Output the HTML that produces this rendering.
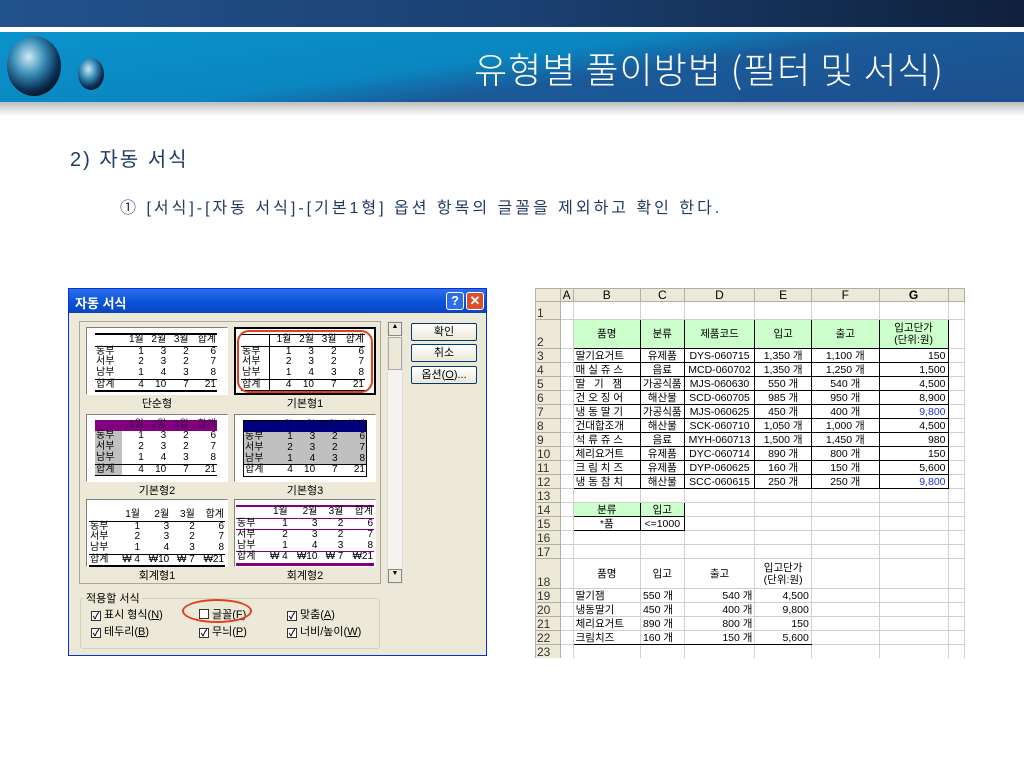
<!DOCTYPE html>
<html><head><meta charset="utf-8"><style>
*{margin:0;padding:0;box-sizing:border-box}
body{width:1024px;height:768px;position:relative;background:#fff;font-family:"Liberation Sans","Noto Sans CJK KR",sans-serif;overflow:hidden}
.abs{position:absolute}
#top{left:0;top:0;width:1024px;height:27px;background:linear-gradient(90deg,#22528c,#1b4173 50%,#0f203b)}
#band{left:0;top:32px;width:1024px;height:70px;background:linear-gradient(172deg,#0b93cc 0%,#0a86c0 45%,#1a5a99 60%,#1d4f8e 100%)}
#shadow{left:0;top:102px;width:1024px;height:14px;background:linear-gradient(#bdbdbd,#fff)}
#title{right:80px;top:42px;color:#fff;font-size:36px;font-family:"Noto Sans CJK KR",sans-serif;font-weight:300;letter-spacing:1px}
.h1{left:70px;top:143px;font-size:20px;color:#1f3b63;letter-spacing:2px}
.h2{left:120px;top:194px;font-size:16px;color:#1f3b63;letter-spacing:3px}
#dlg{left:68px;top:288px;width:419px;height:368px;background:#ece9d8;border:1px solid #0831d9}
#tb{left:0;top:0;width:417px;height:24px;background:linear-gradient(#2a6fe9,#0a50d8 60%,#0a46c0);color:#fff;font-weight:bold;font-size:13px;padding:4px 0 0 6px}
.tbb{top:3px;width:18px;height:18px;border:1px solid #fff;border-radius:3px;color:#fff;font-size:13px;font-weight:bold;text-align:center;line-height:16px}
#pv{left:10px;top:32px;width:302px;height:263px;border:1px solid #aca899;background:#ece9d8}
.p{position:absolute;width:142px;height:68px;background:#fff;border:1px solid #808080;border-right-color:#fff;border-bottom-color:#fff;font-size:10px;line-height:11px}
.p table{position:absolute;border-collapse:collapse;font-size:10px;line-height:10.5px}
.p td{padding:0 1px;text-align:right;height:11px}
.p td:first-child{text-align:left}
.lbl{position:absolute;width:142px;text-align:center;font-size:11px}
.btn{position:absolute;left:342px;width:66px;height:18px;border:1px solid #003c74;border-radius:2px;background:linear-gradient(#fff,#ece9d8);font-size:11px;text-align:center;line-height:16px}
#sb{left:318px;top:32px;width:16px;height:263px;background:#f4f3ee;border:1px solid #ddd}
.chk{position:absolute;font-size:11px}
.chk b{display:inline-block;width:10px;height:10px;border:1px solid #333;background:#fff;vertical-align:-1px;margin-right:3px;font-size:9px;line-height:8px;text-align:center;font-weight:bold}
#sh{left:535px;top:288px;width:430px;height:370px;background:#fff;overflow:hidden}
#sh table{border-collapse:collapse;font-size:10.5px;table-layout:fixed}
#sh td{border:1px solid #d0d0d0;height:14px;padding:0 2px;white-space:nowrap;overflow:hidden;line-height:12px}
#sh td.rh{background:#ece9d8;border-color:#b0b0a0;text-align:left;font-size:12px;color:#333;padding:0 1px;vertical-align:bottom}
#sh tr.ch td{background:#ece9d8;border-color:#b0b0a0;text-align:center;font-size:12px;height:13px}
.g{background:#ccffcc;text-align:center}
.bx{border:1px solid #000 !important}
.r{text-align:right}.c{text-align:center}.bl{color:#2233dd}
</style></head><body>
<div id="top" class="abs"></div>
<div id="band" class="abs"></div>
<div id="shadow" class="abs"></div>
<svg class="abs" style="left:4px;top:34px" width="110" height="66">
<defs><radialGradient id="s1" cx="40%" cy="35%" r="65%"><stop offset="0" stop-color="#cfe9f5"/><stop offset=".45" stop-color="#3a8fb8"/><stop offset=".85" stop-color="#0b2f55"/><stop offset="1" stop-color="#051a30"/></radialGradient></defs>
<ellipse cx="30" cy="32" rx="27" ry="30" fill="url(#s1)"/>
<ellipse cx="87" cy="40" rx="13" ry="16" fill="url(#s1)"/>
</svg>
<div id="title" class="abs">유형별 풀이방법 (필터 및 서식)</div>
<div class="abs h1">2) 자동 서식</div>
<div class="abs h2">① [서식]-[자동 서식]-[기본1형] 옵션 항목의 글꼴을 제외하고 확인 한다.</div>

<div id="dlg" class="abs">
<div id="tb" class="abs">자동 서식</div>
<div class="abs tbb" style="left:377px;background:#2a6fe9">?</div>
<div class="abs tbb" style="left:397px;background:#d9512c">✕</div>
<div id="pv" class="abs">
 <div class="p" style="left:6px;top:5px"><table style="left:8px;top:5px;width:122px;border-top:2px solid #000"><tr style="border-bottom:1px solid #000"><td></td><td>1월</td><td>2월</td><td>3월</td><td>합계</td></tr><tr><td>동부</td><td>1</td><td>3</td><td>2</td><td>6</td></tr><tr><td>서부</td><td>2</td><td>3</td><td>2</td><td>7</td></tr><tr style="border-bottom:1px solid #000"><td>남부</td><td>1</td><td>4</td><td>3</td><td>8</td></tr><tr style="border-bottom:2px solid #000"><td>합계</td><td>4</td><td>10</td><td>7</td><td>21</td></tr></table></div>
 <div class="lbl" style="left:6px;top:73px">단순형</div>
 <div class="p" style="left:154px;top:5px;border:2px solid #000"><table style="left:5px;top:5px;width:124px;border-top:1px solid #000"><tr style="border-bottom:1px solid #000"><td style="border-right:1px solid #000"></td><td>1월</td><td>2월</td><td>3월</td><td>합계</td></tr><tr><td style="border-right:1px solid #000">동부</td><td>1</td><td>3</td><td>2</td><td>6</td></tr><tr><td style="border-right:1px solid #000">서부</td><td>2</td><td>3</td><td>2</td><td>7</td></tr><tr style="border-bottom:1px solid #000"><td style="border-right:1px solid #000">남부</td><td>1</td><td>4</td><td>3</td><td>8</td></tr><tr style="border-bottom:1px solid #000"><td style="border-right:1px solid #000">합계</td><td>4</td><td>10</td><td>7</td><td>21</td></tr></table>
 <div style="position:absolute;left:1px;top:1px;width:136px;height:63px;border:2.5px solid #e04020;border-radius:12px"></div></div>
 <div class="lbl" style="left:154px;top:73px">기본형1</div>
 <div class="p" style="left:6px;top:92px"><table style="left:8px;top:5px;width:122px"><tr style="background:#800080;color:#400040"><td></td><td>1월</td><td>2월</td><td>3월</td><td>합계</td></tr><tr><td style="background:#c0c0c0">동부</td><td>1</td><td>3</td><td>2</td><td>6</td></tr><tr><td style="background:#c0c0c0">서부</td><td>2</td><td>3</td><td>2</td><td>7</td></tr><tr style="border-bottom:1px solid #000"><td style="background:#c0c0c0">남부</td><td>1</td><td>4</td><td>3</td><td>8</td></tr><tr style="border-bottom:1px solid #000"><td style="background:#c0c0c0">합계</td><td>4</td><td>10</td><td>7</td><td>21</td></tr></table></div>
 <div class="lbl" style="left:6px;top:160px">기본형2</div>
 <div class="p" style="left:154px;top:92px"><table style="left:8px;top:5px;width:124px;border:1px solid #000"><tr style="background:#000080;color:#000060"><td></td><td>1월</td><td>2월</td><td>3월</td><td>합계</td></tr><tr style="background:#c0c0c0"><td>동부</td><td>1</td><td>3</td><td>2</td><td>6</td></tr><tr style="background:#c0c0c0"><td>서부</td><td>2</td><td>3</td><td>2</td><td>7</td></tr><tr style="background:#c0c0c0;border-bottom:1px solid #000"><td>남부</td><td>1</td><td>4</td><td>3</td><td>8</td></tr><tr><td>합계</td><td>4</td><td>10</td><td>7</td><td>21</td></tr></table></div>
 <div class="lbl" style="left:154px;top:160px">기본형3</div>
 <div class="p" style="left:6px;top:177px"><table style="left:2px;top:10px;width:136px"><tr style="border-bottom:1px solid #000"><td></td><td>1월</td><td>2월</td><td>3월</td><td>합계</td></tr><tr><td>동부</td><td>1</td><td>3</td><td>2</td><td>6</td></tr><tr><td>서부</td><td>2</td><td>3</td><td>2</td><td>7</td></tr><tr style="border-bottom:1px solid #000"><td>남부</td><td>1</td><td>4</td><td>3</td><td>8</td></tr><tr style="border-bottom:2px solid #000"><td>합계</td><td>₩ 4</td><td>₩10</td><td>₩ 7</td><td>₩21</td></tr></table></div>
 <div class="lbl" style="left:6px;top:245px">회계형1</div>
 <div class="p" style="left:154px;top:177px"><table style="left:1px;top:5px;width:138px;border-top:2px solid #800080"><tr style="border-bottom:1px solid #800080"><td></td><td>1월</td><td>2월</td><td>3월</td><td>합계</td></tr><tr style="border-bottom:1px solid #800080"><td>동부</td><td>1</td><td>3</td><td>2</td><td>6</td></tr><tr><td>서부</td><td>2</td><td>3</td><td>2</td><td>7</td></tr><tr style="border-bottom:1px solid #800080"><td>남부</td><td>1</td><td>4</td><td>3</td><td>8</td></tr><tr style="border-bottom:3px solid #800080"><td>합계</td><td>₩ 4</td><td>₩10</td><td>₩ 7</td><td>₩21</td></tr></table></div>
 <div class="lbl" style="left:154px;top:245px">회계형2</div>
</div>
<div id="sb" class="abs"><div style="position:absolute;left:0;top:0;width:14px;height:14px;background:#ece9d8;border:1px solid #888;font-size:7px;text-align:center">▲</div><div style="position:absolute;left:0;top:15px;width:14px;height:33px;background:#ece9d8;border:1px solid #aaa"></div><div style="position:absolute;left:0;bottom:0;width:14px;height:14px;background:#ece9d8;border:1px solid #888;font-size:7px;text-align:center">▼</div></div>
<div class="btn" style="top:34px">확인</div>
<div class="btn" style="top:55px">취소</div>
<div class="btn" style="top:77px">옵션(<u>O</u>)...</div>
<div class="abs" style="left:11px;top:309px;width:300px;height:51px;border:1px solid #d0d0bf;border-radius:3px"></div>
<div class="abs" style="left:15px;top:301px;font-size:11px;background:#ece9d8;padding:0 2px">적용할 서식</div>
<div class="chk" style="left:22px;top:317px"><b>✓</b>표시 형식(<u>N</u>)</div>
<div class="chk" style="left:130px;top:317px"><b></b>글꼴(<u>F</u>)</div>
<div class="abs" style="left:113px;top:310px;width:70px;height:24px;border:2.5px solid #e04020;border-radius:50%"></div>
<div class="chk" style="left:218px;top:317px"><b>✓</b>맞춤(<u>A</u>)</div>
<div class="chk" style="left:22px;top:334px"><b>✓</b>테두리(<u>B</u>)</div>
<div class="chk" style="left:130px;top:334px"><b>✓</b>무늬(<u>P</u>)</div>
<div class="chk" style="left:218px;top:334px"><b>✓</b>너비/높이(<u>W</u>)</div>
</div>

<div id="sh" class="abs">
<table>
<colgroup><col style="width:25px"><col style="width:12px"><col style="width:68px"><col style="width:41px"><col style="width:71px"><col style="width:57px"><col style="width:69px"><col style="width:70px"><col style="width:17px"></colgroup>
<tr class="ch"><td></td><td>A</td><td>B</td><td>C</td><td>D</td><td>E</td><td>F</td><td style="font-weight:bold">G</td><td></td></tr>
<tr style="height:18px"><td class="rh">1</td><td></td><td></td><td></td><td></td><td></td><td></td><td></td><td></td></tr>
<tr style="height:29px"><td class="rh">2</td><td></td><td class="g bx">품명</td><td class="g bx">분류</td><td class="g bx">제품코드</td><td class="g bx">입고</td><td class="g bx">출고</td><td class="g bx" style="line-height:12px">입고단가<br>(단위:원)</td><td></td></tr>
<tr><td class="rh">3</td><td></td><td class="bx">딸기요거트</td><td class="bx c">유제품</td><td class="bx c">DYS-060715</td><td class="bx c">1,350 개</td><td class="bx c">1,100 개</td><td class="bx r">150</td><td></td></tr>
<tr><td class="rh">4</td><td></td><td class="bx">매 실 쥬 스</td><td class="bx c">음료</td><td class="bx c">MCD-060702</td><td class="bx c">1,350 개</td><td class="bx c">1,250 개</td><td class="bx r">1,500</td><td></td></tr>
<tr><td class="rh">5</td><td></td><td class="bx">딸 &nbsp; 기 &nbsp; 잼</td><td class="bx c">가공식품</td><td class="bx c">MJS-060630</td><td class="bx c">550 개</td><td class="bx c">540 개</td><td class="bx r">4,500</td><td></td></tr>
<tr><td class="rh">6</td><td></td><td class="bx">건 오 징 어</td><td class="bx c">해산물</td><td class="bx c">SCD-060705</td><td class="bx c">985 개</td><td class="bx c">950 개</td><td class="bx r">8,900</td><td></td></tr>
<tr><td class="rh">7</td><td></td><td class="bx">냉 동 딸 기</td><td class="bx c">가공식품</td><td class="bx c">MJS-060625</td><td class="bx c">450 개</td><td class="bx c">400 개</td><td class="bx r bl">9,800</td><td></td></tr>
<tr><td class="rh">8</td><td></td><td class="bx">건대합조개</td><td class="bx c">해산물</td><td class="bx c">SCK-060710</td><td class="bx c">1,050 개</td><td class="bx c">1,000 개</td><td class="bx r">4,500</td><td></td></tr>
<tr><td class="rh">9</td><td></td><td class="bx">석 류 쥬 스</td><td class="bx c">음료</td><td class="bx c">MYH-060713</td><td class="bx c">1,500 개</td><td class="bx c">1,450 개</td><td class="bx r">980</td><td></td></tr>
<tr><td class="rh">10</td><td></td><td class="bx">체리요거트</td><td class="bx c">유제품</td><td class="bx c">DYC-060714</td><td class="bx c">890 개</td><td class="bx c">800 개</td><td class="bx r">150</td><td></td></tr>
<tr><td class="rh">11</td><td></td><td class="bx">크 림 치 즈</td><td class="bx c">유제품</td><td class="bx c">DYP-060625</td><td class="bx c">160 개</td><td class="bx c">150 개</td><td class="bx r">5,600</td><td></td></tr>
<tr><td class="rh">12</td><td></td><td class="bx">냉 동 참 치</td><td class="bx c">해산물</td><td class="bx c">SCC-060615</td><td class="bx c">250 개</td><td class="bx c">250 개</td><td class="bx r bl">9,800</td><td></td></tr>
<tr><td class="rh">13</td><td></td><td></td><td></td><td></td><td></td><td></td><td></td><td></td></tr>
<tr><td class="rh">14</td><td></td><td class="g bx">분류</td><td class="g bx">입고</td><td></td><td></td><td></td><td></td><td></td></tr>
<tr><td class="rh">15</td><td></td><td class="bx c">*품</td><td class="bx c">&lt;=1000</td><td></td><td></td><td></td><td></td><td></td></tr>
<tr><td class="rh">16</td><td></td><td></td><td></td><td></td><td></td><td></td><td></td><td></td></tr>
<tr><td class="rh">17</td><td></td><td></td><td></td><td></td><td></td><td></td><td></td><td></td></tr>
<tr style="height:30px"><td class="rh">18</td><td></td><td class="c" style="border-top:1px solid #000">품명</td><td class="c" style="border-top:1px solid #000">입고</td><td class="c" style="border-top:1px solid #000">출고</td><td class="c" style="border-top:1px solid #000;line-height:12px">입고단가<br>(단위:원)</td><td></td><td></td><td></td></tr>
<tr><td class="rh">19</td><td></td><td>딸기잼</td><td>550 개</td><td class="r">540 개</td><td class="r">4,500</td><td></td><td></td><td></td></tr>
<tr><td class="rh">20</td><td></td><td>냉동딸기</td><td>450 개</td><td class="r">400 개</td><td class="r">9,800</td><td></td><td></td><td></td></tr>
<tr><td class="rh">21</td><td></td><td>체리요거트</td><td>890 개</td><td class="r">800 개</td><td class="r">150</td><td></td><td></td><td></td></tr>
<tr><td class="rh">22</td><td></td><td style="border-bottom:1px solid #000">크림치즈</td><td style="border-bottom:1px solid #000">160 개</td><td class="r" style="border-bottom:1px solid #000">150 개</td><td class="r" style="border-bottom:1px solid #000">5,600</td><td></td><td></td><td></td></tr>
<tr><td class="rh">23</td><td></td><td></td><td></td><td></td><td></td><td></td><td></td><td></td></tr>
</table>
</div>
</body></html>
